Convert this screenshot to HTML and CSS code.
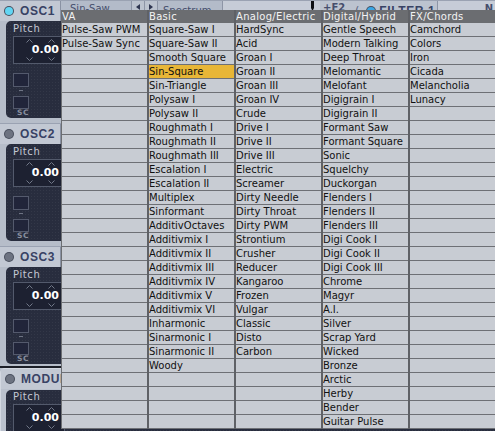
FILE: index.html
```html
<!DOCTYPE html>
<html lang="en">
<head>
<meta charset="utf-8">
<title>Oscillator waveforms</title>
<link rel="stylesheet" href="styles.css">
</head>
<body>
<div class="rack">
  <div class="device osc-device">
    <section class="osc">
      <header class="osc-head">
        <div class="osc-tab"><span class="led led-on"></span><span class="osc-name">OSC1</span></div>
        <div class="osc-fields">
          <div class="field wave-name">Sin-Saw</div>
          <div class="field step"><svg viewBox="0 0 4 6"><path d="M4 0 L0 3 L4 6Z"/></svg></div>
          <div class="field step"><svg viewBox="0 0 4 6"><path d="M0 0 L4 3 L0 6Z"/></svg></div>
          <div class="field mode">Spectrum –</div>
          <div class="field blank"><span class="pointer"></span></div>
          <div class="field route">+F2</div>
          <div class="field filter"><span class="paren">(</span><span class="led led-blue"></span><b>FILTER 1</b></div>
          <div class="field tail">N</div>
        </div>
      </header>
      <div class="osc-body">
        <div class="knob-label">Pitch</div>
        <div class="value-box">
          <div class="spin-row"><svg class="chev" viewBox="0 0 7 4"><path d="M0.5 3.5 L3.5 0.5 L6.5 3.5"/></svg><svg class="chev" viewBox="0 0 7 4"><path d="M0.5 3.5 L3.5 0.5 L6.5 3.5"/></svg></div>
          <div class="value">0.00</div>
          <div class="spin-row"><svg class="chev" viewBox="0 0 7 4"><path d="M0.5 0.5 L3.5 3.5 L6.5 0.5"/></svg><svg class="chev" viewBox="0 0 7 4"><path d="M0.5 0.5 L3.5 3.5 L6.5 0.5"/></svg></div>
        </div>
        <div class="mini-btn"></div>
        <div class="mini-dash"></div>
        <div class="mini-btn short"></div>
        <div class="mini-label">SC</div>
      </div>
    </section>

    <section class="osc">
      <header class="osc-head">
        <div class="osc-tab"><span class="led"></span><span class="osc-name">OSC2</span></div>
        <div class="osc-fields"></div>
      </header>
      <div class="osc-body">
        <div class="knob-label">Pitch</div>
        <div class="value-box">
          <div class="spin-row"><svg class="chev" viewBox="0 0 7 4"><path d="M0.5 3.5 L3.5 0.5 L6.5 3.5"/></svg><svg class="chev" viewBox="0 0 7 4"><path d="M0.5 3.5 L3.5 0.5 L6.5 3.5"/></svg></div>
          <div class="value">0.00</div>
          <div class="spin-row"><svg class="chev" viewBox="0 0 7 4"><path d="M0.5 0.5 L3.5 3.5 L6.5 0.5"/></svg><svg class="chev" viewBox="0 0 7 4"><path d="M0.5 0.5 L3.5 3.5 L6.5 0.5"/></svg></div>
        </div>
        <div class="mini-btn"></div>
        <div class="mini-dash"></div>
        <div class="mini-btn short"></div>
        <div class="mini-label">SC</div>
      </div>
    </section>

    <section class="osc last">
      <header class="osc-head">
        <div class="osc-tab"><span class="led"></span><span class="osc-name">OSC3</span></div>
        <div class="osc-fields"></div>
      </header>
      <div class="osc-body">
        <div class="knob-label">Pitch</div>
        <div class="value-box">
          <div class="spin-row"><svg class="chev" viewBox="0 0 7 4"><path d="M0.5 3.5 L3.5 0.5 L6.5 3.5"/></svg><svg class="chev" viewBox="0 0 7 4"><path d="M0.5 3.5 L3.5 0.5 L6.5 3.5"/></svg></div>
          <div class="value">0.00</div>
          <div class="spin-row"><svg class="chev" viewBox="0 0 7 4"><path d="M0.5 0.5 L3.5 3.5 L6.5 0.5"/></svg><svg class="chev" viewBox="0 0 7 4"><path d="M0.5 0.5 L3.5 3.5 L6.5 0.5"/></svg></div>
        </div>
        <div class="mini-btn"></div>
        <div class="mini-dash"></div>
        <div class="mini-btn short"></div>
        <div class="mini-label">SC</div>
      </div>
    </section>
  </div>

  <div class="device mod-device">
    <section class="osc last">
      <header class="osc-head">
        <div class="osc-tab"><span class="led"></span><span class="osc-name">MODUL</span></div>
        <div class="osc-fields"></div>
      </header>
      <div class="osc-body mod-body">
        <div class="knob-label">Pitch</div>
        <div class="value-box">
          <div class="spin-row"><svg class="chev" viewBox="0 0 7 4"><path d="M0.5 3.5 L3.5 0.5 L6.5 3.5"/></svg><svg class="chev" viewBox="0 0 7 4"><path d="M0.5 3.5 L3.5 0.5 L6.5 3.5"/></svg></div>
          <div class="value">0.00</div>
          <div class="spin-row"><svg class="chev" viewBox="0 0 7 4"><path d="M0.5 0.5 L3.5 3.5 L6.5 0.5"/></svg><svg class="chev" viewBox="0 0 7 4"><path d="M0.5 0.5 L3.5 3.5 L6.5 0.5"/></svg></div>
        </div>
      </div>
    </section>
  </div>
</div>

<div class="wave-menu">
  <div class="menu-col">
    <div class="menu-head">VA</div>
    <div class="menu-list">
      <div class="menu-item">Pulse-Saw PWM</div>
      <div class="menu-item">Pulse-Saw Sync</div>
    </div>
  </div>
  <div class="menu-col">
    <div class="menu-head">Basic</div>
    <div class="menu-list">
      <div class="menu-item">Square-Saw I</div>
      <div class="menu-item">Square-Saw II</div>
      <div class="menu-item">Smooth Square</div>
      <div class="menu-item sel">Sin-Square</div>
      <div class="menu-item">Sin-Triangle</div>
      <div class="menu-item">Polysaw I</div>
      <div class="menu-item">Polysaw II</div>
      <div class="menu-item">Roughmath I</div>
      <div class="menu-item">Roughmath II</div>
      <div class="menu-item">Roughmath III</div>
      <div class="menu-item">Escalation I</div>
      <div class="menu-item">Escalation II</div>
      <div class="menu-item">Multiplex</div>
      <div class="menu-item">Sinformant</div>
      <div class="menu-item">AdditivOctaves</div>
      <div class="menu-item">Additivmix I</div>
      <div class="menu-item">Additivmix II</div>
      <div class="menu-item">Additivmix III</div>
      <div class="menu-item">Additivmix IV</div>
      <div class="menu-item">Additivmix V</div>
      <div class="menu-item">Additivmix VI</div>
      <div class="menu-item">Inharmonic</div>
      <div class="menu-item">Sinarmonic I</div>
      <div class="menu-item">Sinarmonic II</div>
      <div class="menu-item">Woody</div>
    </div>
  </div>
  <div class="menu-col">
    <div class="menu-head">Analog/Electric</div>
    <div class="menu-list">
      <div class="menu-item">HardSync</div>
      <div class="menu-item">Acid</div>
      <div class="menu-item">Groan I</div>
      <div class="menu-item">Groan II</div>
      <div class="menu-item">Groan III</div>
      <div class="menu-item">Groan IV</div>
      <div class="menu-item">Crude</div>
      <div class="menu-item">Drive I</div>
      <div class="menu-item">Drive II</div>
      <div class="menu-item">Drive III</div>
      <div class="menu-item">Electric</div>
      <div class="menu-item">Screamer</div>
      <div class="menu-item">Dirty Needle</div>
      <div class="menu-item">Dirty Throat</div>
      <div class="menu-item">Dirty PWM</div>
      <div class="menu-item">Strontium</div>
      <div class="menu-item">Crusher</div>
      <div class="menu-item">Reducer</div>
      <div class="menu-item">Kangaroo</div>
      <div class="menu-item">Frozen</div>
      <div class="menu-item">Vulgar</div>
      <div class="menu-item">Classic</div>
      <div class="menu-item">Disto</div>
      <div class="menu-item">Carbon</div>
    </div>
  </div>
  <div class="menu-col">
    <div class="menu-head">Digital/Hybrid</div>
    <div class="menu-list">
      <div class="menu-item">Gentle Speech</div>
      <div class="menu-item">Modern Talking</div>
      <div class="menu-item">Deep Throat</div>
      <div class="menu-item">Melomantic</div>
      <div class="menu-item">Melofant</div>
      <div class="menu-item">Digigrain I</div>
      <div class="menu-item">Digigrain II</div>
      <div class="menu-item">Formant Saw</div>
      <div class="menu-item">Formant Square</div>
      <div class="menu-item">Sonic</div>
      <div class="menu-item">Squelchy</div>
      <div class="menu-item">Duckorgan</div>
      <div class="menu-item">Flenders I</div>
      <div class="menu-item">Flenders II</div>
      <div class="menu-item">Flenders III</div>
      <div class="menu-item">Digi Cook I</div>
      <div class="menu-item">Digi Cook II</div>
      <div class="menu-item">Digi Cook III</div>
      <div class="menu-item">Chrome</div>
      <div class="menu-item">Magyr</div>
      <div class="menu-item">A.I.</div>
      <div class="menu-item">Silver</div>
      <div class="menu-item">Scrap Yard</div>
      <div class="menu-item">Wicked</div>
      <div class="menu-item">Bronze</div>
      <div class="menu-item">Arctic</div>
      <div class="menu-item">Herby</div>
      <div class="menu-item">Bender</div>
      <div class="menu-item">Guitar Pulse</div>
    </div>
  </div>
  <div class="menu-col">
    <div class="menu-head">FX/Chords</div>
    <div class="menu-list">
      <div class="menu-item">Camchord</div>
      <div class="menu-item">Colors</div>
      <div class="menu-item">Iron</div>
      <div class="menu-item">Cicada</div>
      <div class="menu-item">Melancholia</div>
      <div class="menu-item">Lunacy</div>
    </div>
  </div>
</div>
</body>
</html>
```

FILE: styles.css
```css
* { box-sizing: border-box; }

html, body { margin: 0; padding: 0; }

body {
  width: 495px;
  height: 431px;
  overflow: hidden;
  position: relative;
  background: #b6bdc9;
  font-family: "DejaVu Sans", sans-serif;
}

/* ---------- synth rack ---------- */
.rack {
  display: flex;
  flex-direction: column;
  width: 495px;
  height: 431px;
}

.device { background: #b6bdc9; }

.osc-device {
  flex: none;
  padding-bottom: 2px;
  border-bottom: 2px solid #1b1e27;
}

.mod-device {
  flex: 1;
  background: #bac1cd;
  border-top: 1px solid #d3d8e1;
  border-left: 1px solid #d3d8e1;
  border-top-left-radius: 5px;
}

.osc {
  display: flex;
  flex-direction: column;
  margin-bottom: 5px;
}
.osc.last { margin-bottom: 0; }

.osc-head {
  height: 21px;
  display: flex;
  border-top: 1px solid #9aa2b2;
}
.mod-device .osc-head { border-top: 0; height: 20px; }

.osc-tab {
  width: 61px;
  flex: none;
  display: flex;
  align-items: center;
  padding-left: 5px;
  background: #c2c8d3;
  border-right: 1px solid #8a92a3;
}

.led {
  flex: none;
  width: 8px;
  height: 8px;
  border-radius: 50%;
  background: #6d7381;
  box-shadow: 0 0 0 1px #474d5c;
  margin-right: 7px;
}
.led-on { background: #62d5f3; }
.led-blue { background: #3aa6e4; }

.osc-name {
  font: bold 12px "Liberation Sans", sans-serif;
  color: #384264;
  letter-spacing: 0.6px;
  white-space: nowrap;
}

/* waveform / routing strip to the right of the tab */
.osc-fields {
  flex: 1;
  display: flex;
  align-items: flex-start;
  height: 20px;
  background: #bcc3cf;
}

.field {
  height: 20px;
  flex: none;
  font-size: 10px;
  line-height: 14px;
  color: #464e6c;
  white-space: nowrap;
  border-right: 1px solid #8d95a6;
  display: flex;
  align-items: flex-start;
}

.wave-name { width: 71px; padding: 1px 0 0 9px; background: #b3bbc9; }
.step { width: 13px; justify-content: center; padding-top: 3px; }
.step svg { width: 4px; height: 6px; fill: #2e3550; }
.mode { width: 65px; padding: 3px 0 0 5px; background: #b3bbc9; }
.blank { width: 97px; padding-left: 88px; background: #c6ccd7; border-right: 0; }
.pointer {
  width: 3px;
  height: 10px;
  background: #0d0f14;
  clip-path: polygon(0 0, 100% 0, 100% 70%, 50% 100%, 0 70%);
}
.route { width: 30px; padding: 0 0 0 3px; font-weight: bold; border-right: 0; }
.filter {
  width: 88px;
  align-items: center;
  padding-left: 5px;
}
.filter .paren { font-size: 11px; color: #5a6280; margin-right: 8px; }
.filter .led { margin-right: 4px; }
.filter b { font: bold 12px "Liberation Sans", sans-serif; color: #384264; letter-spacing: 0.6px; }
.tail { flex: 1; justify-content: flex-end; padding: 1px 2px 0 0; background: #c6ccd7; border-right: 0; font-weight: bold; }

/* dark control body */
.osc-body {
  margin-left: 6px;
  width: 489px;
  height: 97px;
  padding: 3px 0 2px 7px;
  background-color: #282d3e;
  background-image: radial-gradient(circle, rgba(255,255,255,0.05) 0.6px, transparent 0.8px);
  background-size: 3px 3px;
  border-radius: 5px 0 0 5px;
  display: flex;
  flex-direction: column;
}
.mod-body {
  height: 41px;
  margin-top: 1px;
  margin-left: 5px;
  padding-top: 2px;
  border-radius: 5px 0 0 0;
}

.knob-label {
  height: 10px;
  font-size: 10px;
  line-height: 10px;
  letter-spacing: 0.6px;
  color: #c4c8d4;
}

.value-box {
  margin-top: 2px;
  width: 52px;
  height: 28px;
  flex: none;
  background: #1d2131;
  border: 1px solid #535a6c;
  display: flex;
  flex-direction: column;
}

.spin-row {
  height: 8px;
  display: flex;
  align-items: center;
  gap: 15px;
  padding-left: 12px;
}

.chev {
  width: 7px;
  height: 4px;
  fill: none;
  stroke: #717888;
  stroke-width: 1;
}

.value {
  height: 10px;
  padding-right: 5px;
  text-align: right;
  font: bold 11px/10px "DejaVu Sans", sans-serif;
  color: #ffffff;
}

.mini-btn {
  margin-top: 9px;
  width: 16px;
  height: 14px;
  flex: none;
  background: #21253a;
  border: 1px solid #545a6d;
}
.mini-btn.short { margin-top: 0; height: 13px; }

.mini-dash {
  height: 9px;
  flex: none;
  padding: 3px 0 0 6px;
}
.mini-dash::before {
  content: "";
  display: block;
  width: 4px;
  height: 1px;
  background: #6e7484;
}

.mini-label {
  height: 7px;
  padding-left: 4px;
  font: bold 7.5px/7px "DejaVu Sans", sans-serif;
  letter-spacing: 0.5px;
  color: #8a90a0;
}

/* ---------- waveform menu (overlays the rack) ---------- */
.wave-menu {
  position: absolute;
  left: 61px;
  top: 10px;
  display: flex;
  border-left: 1px solid #6c6e72;
}

.menu-col {
  width: 87px;
  display: flex;
  flex-direction: column;
  border-left: 2px solid #5f6166;
}
.menu-col:first-child { width: 85px; border-left: 0; }

.menu-head {
  height: 13px;
  background: #6b6d71;
  color: #f3f3f3;
  font-size: 10px;
  line-height: 13px;
  letter-spacing: 0.3px;
  white-space: nowrap;
  overflow: hidden;
}

.menu-list {
  height: 406px;
  background: repeating-linear-gradient(#c8ccd3 0 13px, #6e7075 13px 14px);
}

.menu-item {
  height: 14px;
  border-bottom: 1px solid #6e7075;
  background: #c8ccd3;
  background-clip: padding-box;
  font-size: 10px;
  line-height: 13px;
  color: #111;
  white-space: nowrap;
  overflow: hidden;
}
.menu-item.sel { background-color: #e8b637; }
```
